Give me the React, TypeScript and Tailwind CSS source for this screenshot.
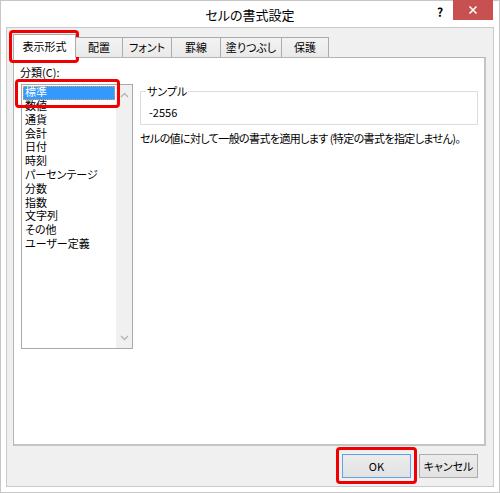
import React from "react";

interface Tab {
  label: string;
  width: string;
}

const tabs: Tab[] = [
  { label: "配置", width: "w-[47px]" },
  { label: "フォント", width: "w-[49px]" },
  { label: "罫線", width: "w-[49px]" },
  { label: "塗りつぶし", width: "w-[61px]" },
  { label: "保護", width: "w-[47px]" },
];

const categories: string[] = [
  "標準",
  "数値",
  "通貨",
  "会計",
  "日付",
  "時刻",
  "パーセンテージ",
  "分数",
  "指数",
  "文字列",
  "その他",
  "ユーザー定義",
];

const Chevron: React.FC<{ up?: boolean }> = ({ up }) => (
  <svg width="9" height="6" viewBox="0 0 9 6" className="mx-auto">
    <path
      d={up ? "M1 5 L4.5 1.5 L8 5" : "M1 1 L4.5 4.5 L8 1"}
      fill="none"
      stroke="#b4b4b4"
      strokeWidth="1.4"
    />
  </svg>
);

const App: React.FC = () => {
  return (
    <div className="relative flex flex-col w-[500px] h-[493px] border border-[#c6c6c6] bg-white text-[11px] text-black font-['Noto_Sans_CJK_JP','Noto_Sans',sans-serif] [font-feature-settings:'palt']">
      {/* Title bar */}
      <div className="relative h-[26px] shrink-0 flex items-center justify-center">
        <span className="text-[13px] pt-[1px]">セルの書式設定</span>
        <span className="absolute left-[436px] top-[2px] text-[12px] font-bold">?</span>
        <div className="absolute -top-px right-[6px] w-[40px] h-[20px] bg-[#c75050] flex items-center justify-center">
          <svg width="10" height="10" viewBox="0 0 10 10">
            <path d="M1.5 1.5 L8.5 8.5 M8.5 1.5 L1.5 8.5" stroke="#fff" strokeWidth="1.6" />
          </svg>
        </div>
      </div>

      {/* Body */}
      <div className="mx-[5px] h-[460px] border border-[#c9c9c9] bg-[#f0f0f0] flex flex-col pt-[6px] pl-[6px] pr-[7px] pb-[8px]">
        {/* Tabs */}
        <div className="relative z-10 flex items-start h-[23px]">
          <div className="w-[63px] h-[24px] bg-white border-l border-t border-r border-[#acacac] flex items-center justify-center pb-[1px]">
            表示形式
          </div>
          {tabs.map((tab) => (
            <div
              key={tab.label}
              className={`${tab.width} mt-[3px] h-[20px] border-t border-r border-[#acacac] bg-linear-to-b from-[#f3f3f3] to-[#e9e9e9] flex items-center justify-center`}
            >
              {tab.label}
            </div>
          ))}
        </div>

        {/* Panel */}
        <div className="h-[389px] bg-white border-l border-t border-[#b4b4b4] border-r-2 border-b-2 border-r-[#c4c4c4] border-b-[#c4c4c4] flex pl-[7px] pt-[7px]">
          {/* Category list */}
          <div className="flex flex-col">
            <div className="-ml-px h-[14px] leading-[14px] mb-[5px]">分類(C):</div>
            <div className="w-[112px] h-[265px] border border-[#a9a9a9] flex">
              <div className="flex-1 pt-px pl-px pr-px font-['Liberation_Sans','Noto_Sans_CJK_JP',sans-serif]">
                {categories.map((c, i) =>
                  i === 0 ? (
                    <div
                      key={c}
                      className="h-[14px] leading-[13px] pl-[2px] bg-[#3399ff] text-white outline outline-1 outline-dotted outline-[#e0a060] -outline-offset-1"
                    >
                      {c}
                    </div>
                  ) : (
                    <div key={c} className="h-[13.8px] leading-[13.8px] pl-[2px]">
                      {c}
                    </div>
                  )
                )}
              </div>
              <div className="w-[16px] bg-[#f0f0f0] flex flex-col justify-between py-[7px]">
                <Chevron up />
                <Chevron />
              </div>
            </div>
          </div>

          {/* Sample + description */}
          <div className="ml-[7px] w-[338px] pt-[26px]">
            <div className="relative h-[34px] border border-[#dcdcdc] pl-[8px] pt-[13px] leading-[14px]">
              <span className="absolute -top-[8px] left-[5px] bg-white px-[1px] leading-[14px]">
                サンプル
              </span>
              -2556
            </div>
            <div className="mt-[6px] leading-[14px] whitespace-nowrap tracking-[-0.6px]">
              セルの値に対して一般の書式を適用します (特定の書式を指定しません)。
            </div>
          </div>
        </div>

        {/* Buttons */}
        <div className="flex justify-end gap-[8px] mt-[8px] pr-[8px]">
          <button className="w-[69px] h-[24px] border border-[#5aa6ee] bg-linear-to-b from-[#ececec] to-[#e2e2e2] flex items-center justify-center">
            OK
          </button>
          <button className="w-[59px] h-[24px] border border-[#adadad] bg-linear-to-b from-[#ececec] to-[#e2e2e2] flex items-center justify-center">
            キャンセル
          </button>
        </div>
      </div>

      {/* Red highlight boxes */}
      <div className="absolute left-[8px] top-[29px] w-[70px] h-[33px] border-[3px] border-[#f00000] rounded-[4px]" />
      <div className="absolute left-[14px] top-[78px] w-[105px] h-[29px] border-[3px] border-[#f00000] rounded-[4px]" />
      <div className="absolute left-[335px] top-[446px] w-[81px] h-[37px] border-[3px] border-[#f00000] rounded-[4px]" />
    </div>
  );
};

export default App;
